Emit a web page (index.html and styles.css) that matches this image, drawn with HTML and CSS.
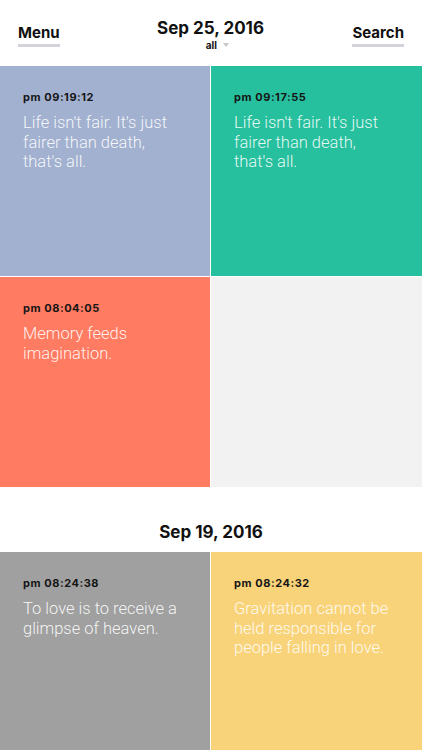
FILE: index.html
```html
<!DOCTYPE html>
<html>
<head>
<meta charset="utf-8">
<link rel="stylesheet" href="styles.css">
</head>
<body>
<header class="topbar">
  <div class="nav-btn">Menu</div>
  <div class="title">
    <div class="date">Sep 25, 2016</div>
    <div class="filter">all <span class="caret"></span></div>
  </div>
  <div class="nav-btn">Search</div>
</header>
<section class="grid">
  <div class="tile blue">
    <div class="time">pm 09:19:12</div>
    <div class="quote">Life isn't fair. It's just fairer than death, that's all.</div>
  </div>
  <div class="tile green">
    <div class="time">pm 09:17:55</div>
    <div class="quote">Life isn't fair. It's just fairer than death, that's all.</div>
  </div>
  <div class="tile coral">
    <div class="time">pm 08:04:05</div>
    <div class="quote">Memory feeds imagination.</div>
  </div>
  <div class="tile empty"></div>
</section>
<h2 class="day">Sep 19, 2016</h2>
<section class="grid">
  <div class="tile gray">
    <div class="time">pm 08:24:38</div>
    <div class="quote">To love is to receive a glimpse of heaven.</div>
  </div>
  <div class="tile yellow">
    <div class="time">pm 08:24:32</div>
    <div class="quote">Gravitation cannot be held responsible for people falling in love.</div>
  </div>
</section>
</body>
</html>
```
FILE: styles.css
```css
html, body {
  margin: 0;
  padding: 0;
  background: #fff;
  font-family: "Liberation Sans", Arial, sans-serif;
  width: 422px;
  overflow: hidden;
}
.topbar {
  height: 66px;
  display: flex;
  justify-content: space-between;
  align-items: flex-start;
  padding: 0 18px;
  box-sizing: border-box;
}
.nav-btn {
  margin-top: 24px;
  font-family: Inter, "Liberation Sans", sans-serif;
  font-weight: 700;
  font-size: 15px;
  color: #111;
  line-height: 17px;
  padding-bottom: 3px;
  border-bottom: 3px solid #d3d3dc;
}
.title {
  margin-top: 18px;
  text-align: center;
  margin-left: 9px;
}
.date, .day {
  font-family: Inter, "Liberation Sans", sans-serif;
  font-weight: 700;
  font-size: 17px;
  color: #111;
  line-height: 20px;
}
.filter {
  font-family: Inter, "Liberation Sans", sans-serif;
  font-weight: 700;
  font-size: 10px;
  color: #111;
  line-height: 12px;
  margin-top: 1px;
  padding-left: 14px;
}
.caret {
  display: inline-block;
  width: 0;
  height: 0;
  border-left: 3.5px solid transparent;
  border-right: 3.5px solid transparent;
  border-top: 4px solid #c8c8c8;
  margin-left: 4px;
  vertical-align: 2px;
}
.grid {
  display: grid;
  grid-template-columns: 210px 211px;
  gap: 1px;
  background: #fff;
}
.tile {
  height: 210px;
  box-sizing: border-box;
  padding: 24px 26px 0 23px;
}
.time {
  font-family: Inter, "Liberation Sans", sans-serif;
  font-weight: 700;
  font-size: 11px;
  color: #151515;
  line-height: 14px;
  letter-spacing: 0.55px;
}
.quote {
  margin-top: 9px;
  font-family: Roboto, "Liberation Sans", sans-serif;
  font-weight: 300;
  font-size: 16.5px;
  line-height: 19.5px;
  color: rgba(255,255,255,0.9);
}
.blue { background: #a2b1d0; }
.green { background: #27c09e; }
.coral { background: #ff7b61; }
.empty { background: #f2f2f2; }
.gray { background: #a0a0a0; }
.yellow { background: #f9d37a; }
.day {
  margin: 0;
  height: 65px;
  box-sizing: border-box;
  padding-top: 35px;
  text-align: center;
  background: #fff;
}
```
